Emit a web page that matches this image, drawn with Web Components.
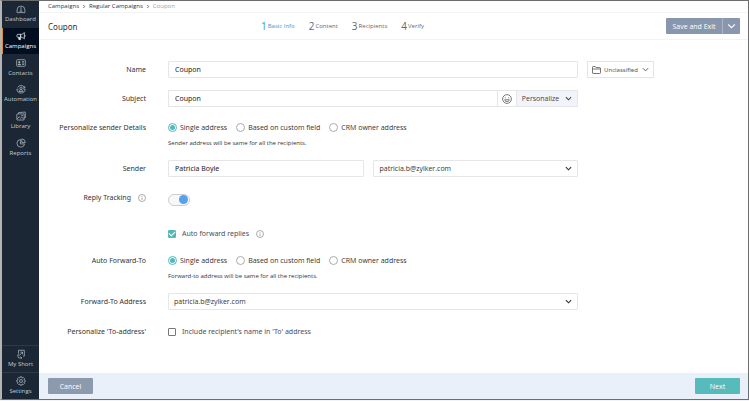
<!DOCTYPE html>
<html lang="en">
<head>
<meta charset="utf-8">
<title>Coupon - Basic Info</title>
<style>
html,body{height:100%;margin:0}
body{background:#f4f4f4;font-family:"Open Sans","Noto Sans",sans-serif;font-size:7px;color:#333}
</style>
</head>
<body>
<campaign-app></campaign-app>
<script>
const base = `
:host,*{box-sizing:border-box}
button,input,select{font:inherit;color:inherit;margin:0}
a{color:inherit;text-decoration:none}
svg{display:block;fill:none;stroke:currentColor;flex:none}
`;
const chevron = (w, h, s = 1) => `<svg width="${w}" height="${h}" viewBox="0 0 8 5" stroke-width="${s}" aria-hidden="true"><path d="M1 1l3 3 3-3"/></svg>`;
const icons = {
  dashboard: '<path d="M3.6 10.4H1.3V7.2a4.7 4.7 0 0 1 9.4 0v3.2H8.4M3.6 10.4h1.5M6.9 10.4h1.5M6 3.8v4.4M6 8.2a1.1 1.1 0 1 1 0 2.2 1.1 1.1 0 0 1 0-2.2"/>',
  campaigns: '<path d="M10 1.8v7.6C8.700 8.200 7.400 7.600 5.600 7.600V4C7.400 4 8.700 3.200 10 1.800z"/><path d="M5.600 4H2.200c-.6 0-1 .4-1 1v1.600c0 .6.4 1 1 1h3.400z"/><path d="M3 7.700l.5 2.600h2L5 7.700" fill="currentColor"/><path d="M10.300 4.900c1.200 0 1.200 1.700 0 1.700"/>',
  contacts: '<rect x=".8" y="2" width="10.4" height="8" rx="1"/><circle cx="4" cy="5" r=".9" fill="currentColor"/><path d="M2.400 8.200c0-1.500 3.200-1.500 3.200 0z" fill="currentColor"/><path d="M7.200 4.300h2.600M7.200 6h2.600M7.200 7.700h2.600"/>',
  automation: '<path d="M2 4.200A4.600 4.600 0 0 1 10.300 4.500M10.500 2.600v2.200H8.300M1 6.300C1 9 3.200 10.900 6 10.900S11 9 11 6.300M1 6.300h2M9 6.300h2"/><circle cx="6" cy="5.200" r="1.400"/><path d="M3.600 9c.3-2.600 4.500-2.600 4.800 0z"/>',
  library: '<path d="M3 3.200V2l8-.8.4 6.700-1.400.2"/><rect x="1" y="3.500" width="8.800" height="7.300" rx=".6"/><path d="M1.500 9.500l2.300-2.600 1.700 1.700 1.400-1.300 2.500 2.400"/><circle cx="7.200" cy="5.500" r=".5"/>',
  reports: '<path d="M5.300 1.800a4.600 4.600 0 1 0 5 5.300H5.300z"/><path d="M7 1.100v4.300h4.200A4.400 4.400 0 0 0 7 1.100z"/>',
  short: '<path d="M3 5.500V1.500h7v7H8.400M5.300 3.800h2.500v2.600M7.600 4L3.400 8.200M3.200 5.800c-1.600 1.700-1.300 3.500.2 4.900h3.400M5.500 9.300l1.500 1.400-1.500 1"/>',
  settings: '<path d="M5 1h2l.4 1.400 1.300-.7 1.500 1.500-.7 1.300L11 5v2l-1.500.5.7 1.300-1.500 1.500-1.300-.7L7 11H5l-.4-1.400-1.300.7-1.500-1.500.7-1.300L1 7V5l1.500-.5-.7-1.300 1.500-1.500 1.300.7z"/><circle cx="6" cy="6" r="1.800"/>',
};
const info = '<svg class="info" width="8" height="8" viewBox="0 0 8 8" stroke-width=".7" role="img" aria-label="Information"><circle cx="4" cy="4" r="3.500"/><path d="M4 3.500V6M4 2v.8"/></svg>';

class Base extends HTMLElement {
  connectedCallback() {
    if (this.shadowRoot) return;
    this.attachShadow({mode: 'open'}).innerHTML = `<style>${base}${this.css()}</style>${this.html()}`;
  }
  a(n) { return this.getAttribute(n) || ''; }
}

customElements.define('nav-item', class extends Base {
  css() { return `
:host{display:block}
a{height:100%;display:flex;flex-direction:column;align-items:center;justify-content:center;gap:1px;font-size:6px;line-height:9px;color:#c3ccd4;border-left:1px solid transparent;padding-right:1px}
svg{stroke-width:.9;color:#aeb9c3}
:host([active]) a{background:#020e20;border-color:#d8922c;color:#fff}
:host([active]) svg{color:#e4e9ee}`; }
  html() { return `<a href="#"${this.hasAttribute('active') ? ' aria-current="page"' : ''}><svg width="10" height="10" viewBox="0 0 12 12" aria-hidden="true">${icons[this.a('icon')]}</svg><slot></slot></a>`; }
});

customElements.define('side-bar', class extends Base {
  css() { return `
:host{display:flex;flex-direction:column;justify-content:space-between;background:#1b2734}
nav{display:grid;grid-auto-rows:1fr}
.top{min-height:160px}
.low nav-item{min-height:27px;border-top:1px solid #2c3947}`; }
  html() { return `
<nav class="top" aria-label="Main">
<nav-item icon="dashboard">Dashboard</nav-item><nav-item icon="campaigns" active>Campaigns</nav-item>
<nav-item icon="contacts">Contacts</nav-item><nav-item icon="automation">Automation</nav-item>
<nav-item icon="library">Library</nav-item><nav-item icon="reports">Reports</nav-item></nav>
<nav class="low" aria-label="Account"><nav-item icon="short">My Short</nav-item><nav-item icon="settings">Settings</nav-item></nav>`; }
});

customElements.define('bread-crumbs', class extends Base {
  css() { return `
:host{display:block;padding:0 9px;border-bottom:1px solid #f4f4f4}
nav{display:flex;align-items:center;gap:3px;font-size:6px;line-height:11px;color:#333}
svg{transform:rotate(-90deg)}
span{color:#98a1b0}`; }
  html() { return `<nav aria-label="Breadcrumb"><a href="#">Campaigns</a>${chevron(4, 3, 1.4)}<a href="#">Regular Campaigns</a>${chevron(4, 3, 1.4)}<span aria-current="page">Coupon</span></nav>`; }
});

customElements.define('step-item', class extends Base {
  css() { return `
:host{display:block;color:#666}
:host([active]){color:#3f93d9}
a{display:flex;align-items:center;gap:1px;font-size:6px}
b{font-weight:400;font-size:10px;line-height:14px}`; }
  html() { return `<a href="#"><b>${this.a('number')}</b><slot></slot></a>`; }
});

customElements.define('page-header', class extends Base {
  css() { return `
:host{display:flex;align-items:center;padding:0 8px 0 9px;height:27px;border-bottom:1px solid #f3f3f3}
h1{margin:0;flex:0 0 213px;font:400 8px "Noto Sans",sans-serif;color:#333}
.steps{display:flex;gap:14px;flex:1}
.save{display:flex;color:#fff}
button{border:0;background:#8997ae;height:16px;padding:0;display:grid;place-items:center}
.main{width:56px;border-radius:1px 0 0 1px}
.more{width:18px;border-left:1px solid #a9b4c5;border-radius:0 1px 1px 0}`; }
  html() { return `<h1>Coupon</h1>
<nav class="steps" aria-label="Steps"><step-item number="1" active>Basic Info</step-item><step-item number="2">Content</step-item><step-item number="3">Recipients</step-item><step-item number="4">Verify</step-item></nav>
<div class="save"><button class="main">Save and Exit</button><button class="more" aria-label="More save options">${chevron(9, 6, 1)}</button></div>`; }
});

/* A labelled form row: label column, control column, room for a trailing control. */
class Row extends Base {
  css() { return `
:host{display:grid;grid-template-columns:107px minmax(0,1fr) 66px;column-gap:22px}
.name{display:flex;justify-content:flex-end;align-items:center;gap:7px;height:17px;font-family:"Noto Sans",sans-serif;white-space:nowrap}
.box{display:flex;align-items:center;min-height:17px;min-width:0}
.after{margin-left:-13px}
.info{color:#888}
.text,.select{height:17px;border:1px solid #e6e6e6;border-radius:1px;background:#fff;flex:1;min-width:0}
.text{padding:0 6px;font-family:"Noto Sans",sans-serif;color:#222}
.select{display:grid;align-items:center}
.select>*{grid-area:1/1}
select{appearance:none;border:0;background:none;height:15px;width:100%;padding:0 16px 0 5px}
.select svg{justify-self:end;margin-right:5px;pointer-events:none}
.check{display:flex;align-items:center;gap:6px;font-family:"Noto Sans",sans-serif;color:#44505f}
.check input{appearance:none;display:grid;place-items:center;width:8px;height:8px;border:1px solid #777;border-radius:1px}
.check input:checked{background:#52b8b8;border-color:#52b8b8}
.check input:checked::after{content:"";width:5px;height:3px;border:solid #fff;border-width:0 0 1px 1px;transform:rotate(-45deg);margin-top:-1px}
${this.extra()}`; }
  extra() { return ''; }
  html() { return `${this.name()}<div class="box">${this.control()}</div><div class="after"><slot name="after"></slot></div>`; }
  name() { return `<label class="name" for="f">${this.a('label')}</label>`; }
}

customElements.define('text-row', class extends Row {
  control() { return `<input class="text" id="f" value="${this.a('value')}">`; }
});

customElements.define('subject-row', class extends Row {
  extra() { return `
.text{border-right:0;border-radius:1px 0 0 1px}
button{height:17px;padding:0;border:1px solid #e6e6e6;background:#fff;display:flex;align-items:center;justify-content:center}
.smile{width:19px;border-right:0;color:#555}
.pers{width:62px;gap:6px;background:#f1f5fb;color:#444}`; }
  control() { return `<input class="text" id="f" value="${this.a('value')}"><button class="smile" aria-label="Insert emoji"><svg width="10" height="10" viewBox="0 0 10 10" stroke-width=".8"><circle cx="5" cy="5" r="4.400"/><path d="M3.300 3.400v.9M6.700 3.400v.9M2.600 5.800c.6 2.300 4.200 2.300 4.800 0z"/></svg></button><button class="pers">Personalize ${chevron(7, 5, 1.2)}</button>`; }
});

customElements.define('radio-row', class extends Row {
  extra() { return `
.box{flex-wrap:wrap;row-gap:2px}
.opts{display:flex;gap:9px;height:17px;width:100%;white-space:nowrap}
.opts label{display:flex;align-items:center;gap:3px}
.opts input{appearance:none;display:grid;place-items:center;width:9px;height:9px;border:1px solid #aaa;border-radius:50%}
.opts input:checked{border-color:#4fb9c0}
.opts input:checked::after{content:"";width:5px;height:5px;border-radius:50%;background:#4fb9c0}
p{margin:0;font-size:6px;line-height:10px}`; }
  name() { return `<span class="name" id="g">${this.a('label')}</span>`; }
  control() {
    return `<div class="opts" role="radiogroup" aria-labelledby="g">${['Single address', 'Based on custom field', 'CRM owner address'].map((t, i) => `<label><input type="radio" name="r"${i ? '' : ' checked'}>${t}</label>`).join('')}</div><p>${this.a('hint')}</p>`;
  }
});

customElements.define('sender-row', class extends Row {
  extra() { return '.box{display:grid;grid-template-columns:minmax(0,49fr) minmax(0,51fr);gap:9px}'; }
  control() { return `<input class="text" id="f" value="Patricia Boyle"><div class="select"><select aria-label="Sender address"><option>patricia.b@zylker.com</option></select>${chevron(7, 5, 1.3)}</div>`; }
});

customElements.define('select-row', class extends Row {
  control() { return `<div class="select"><select id="f"><option>${this.a('value')}</option></select>${chevron(7, 5, 1.3)}</div>`; }
});

customElements.define('toggle-row', class extends Row {
  extra() { return `
.toggle{appearance:none;display:flex;align-items:center;justify-content:flex-end;width:22px;height:12px;padding:0 1px;border:1px solid #ccc;border-radius:6px;background:#f8f8f8}
.toggle::after{content:"";width:9px;height:9px;border-radius:50%;background:#55a1ed}
.box{padding-top:4px}`; }
  name() { return `<label class="name" for="f">${this.a('label')}${info}</label>`; }
  control() { return `<input class="toggle" id="f" type="checkbox" role="switch" checked>`; }
});

customElements.define('check-row', class extends Row {
  extra() { return '.box{gap:7px}'; }
  name() { return `<span class="name">${this.a('label')}</span>`; }
  control() { return `<label class="check"><input type="checkbox"${this.hasAttribute('checked') ? ' checked' : ''}>${this.a('text')}</label>${this.hasAttribute('info') ? info : ''}`; }
});

customElements.define('folder-button', class extends Base {
  css() { return `
:host{display:block}
button{display:flex;align-items:center;justify-content:center;gap:3px;width:67px;height:17px;padding:0;border:1px solid #e2e4e8;border-radius:1px;background:#fff;box-shadow:0 0 1px #e4e4e4;font:6px "Noto Sans",sans-serif;color:#555}
svg:last-child{margin-left:1px}`; }
  html() { return `<button><svg width="9" height="8" viewBox="0 0 9 8" stroke-width=".8" aria-hidden="true"><path d="M.5 7V1.200C.5.800.800.500 1.200.500h2l.8 1.100h3.800c.4 0 .7.3.7.700V6.800c0 .4-.3.700-.7.700H1.200C.8 7.500.5 7.200.5 7zM.5 3h8"/></svg><slot></slot>${chevron(7, 5, 1.1)}</button>`; }
});

customElements.define('page-footer', class extends Base {
  css() { return `
:host{display:flex;justify-content:space-between;align-items:center;height:26px;padding:0 8px 0 9px;background:#e9f0f9}
button{width:45px;height:16px;padding:0;border:0;border-radius:1px;color:#fff;background:#8c9aad}
.next{background:#57bbbb}`; }
  html() { return `<button>Cancel</button><button class="next">Next</button>`; }
});

customElements.define('campaign-app', class extends Base {
  css() { return `
:host{display:grid;grid-template-columns:37px minmax(0,1fr);min-height:calc(100vh - 1px);border:solid #6d6d6d;border-width:1px 1px 1px 2px;border-left-color:#b4b4b4;background:#fff}
main{display:flex;flex-direction:column;min-width:0}
form{flex:1;display:flex;flex-direction:column;gap:12px;padding:21px 82px 12px 0}
.nested{margin:7px 0 -2px}
.last{margin-top:1px}`; }
  html() { return `<side-bar></side-bar><main><bread-crumbs></bread-crumbs><page-header></page-header>
<form onsubmit="return false">
<text-row label="Name" value="Coupon"><folder-button slot="after">Unclassified</folder-button></text-row>
<subject-row label="Subject" value="Coupon"></subject-row>
<radio-row label="Personalize sender Details" hint="Sender address will be same for all the recipients."></radio-row>
<sender-row label="Sender"></sender-row>
<toggle-row label="Reply Tracking"></toggle-row>
<check-row class="nested" text="Auto forward replies" checked info></check-row>
<radio-row label="Auto Forward-To" hint="Forward-to address will be same for all the recipients."></radio-row>
<select-row label="Forward-To Address" value="patricia.b@zylker.com"></select-row>
<check-row class="last" label="Personalize 'To-address'" text="Include recipient's name in 'To' address"></check-row>
</form><page-footer></page-footer></main>`; }
});
</script>
</body>
</html>
